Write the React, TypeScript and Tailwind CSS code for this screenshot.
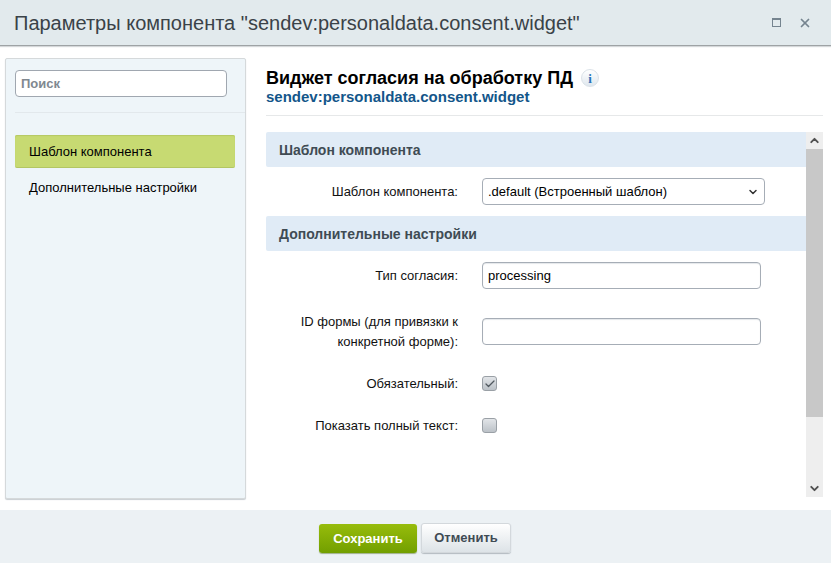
import { Check, ChevronDown, ChevronUp, X } from 'lucide-react';

function SectionHeader(props: { title: string }) {
  return (
    <div className="flex h-[35px] items-center rounded-l-[2px] bg-[#e0ebf6] pl-[13px] pt-[2px] text-[14px] font-bold text-[#3f4b54]">
      {props.title}
    </div>
  );
}

function Label(props: { children: React.ReactNode }) {
  return <div className="w-[192px] shrink-0 text-right text-[13px] leading-[20px] text-[#111]">{props.children}</div>;
}

function TextInput(props: { value?: string }) {
  return (
    <div className="flex h-[27px] w-[279px] items-center rounded-[4px] border border-[#a6adb6] bg-white pl-[5px] text-[13px] text-black shadow-[inset_0_1px_1px_#e4e7ea]">
      {props.value}
    </div>
  );
}

function Checkbox(props: { checked?: boolean }) {
  return (
    <div className="flex h-[15px] w-[15px] items-center justify-center rounded-[3px] border border-[#9aa0a6] bg-gradient-to-b from-[#e2e5e8] to-[#bcc2c8]">
      {props.checked && <Check size={12} strokeWidth={2.5} className="text-[#50585f]" />}
    </div>
  );
}

export default function App() {
  return (
    <div className="flex h-[563px] w-[831px] flex-col overflow-hidden bg-white font-['Liberation_Sans',sans-serif]">
      <header className="flex h-[46px] shrink-0 items-center justify-between border-b border-b-[#9ea3a5] bg-[#e2eaed] pl-[14px] pr-[19px] shadow-[0_1px_1px_#d5d8da]">
        <h1 className="text-[20px] leading-none text-[#3a4248]">Параметры компонента "sendev:personaldata.consent.widget"</h1>
        <div className="flex items-center gap-[17px] text-[#75848f]">
          <div className="h-[9px] w-[9px] border border-t-2 border-[#75848f]" />
          <X size={14} strokeWidth={3} />
        </div>
      </header>

      <div className="flex min-h-0 flex-1">
        <aside className="ml-[5px] mt-[12px] h-[441px] w-[241px] shrink-0 rounded-[2px] border border-[#d5d9db] bg-[#eef5f9] pl-[9px] pt-[11px] shadow-[0_1px_1px_#c8ced2]">
          <div className="flex h-[27px] w-[212px] items-center rounded-[4px] border border-[#a0a7b0] bg-white pl-[5px] text-[13px] font-bold text-[#808890]">
            Поиск
          </div>
          <div className="mt-[15px] h-px bg-[#e2e8ec]" />
          <div className="mt-[22px] flex h-[33px] w-[220px] items-center rounded-[2px] border-b border-b-[#b3c663] bg-[#c7da72] pl-[14px] pt-[2px] text-[13px] text-black shadow-[inset_0_1px_1px_#b5c864]">
            Шаблон компонента
          </div>
          <div className="mt-[11px] pl-[14px] text-[13px] leading-[18px] text-black">Дополнительные настройки</div>
        </aside>

        <main className="ml-[20px] flex min-w-0 flex-1 flex-col pr-[8px]">
          <div className="border-b border-b-[#e6e8e9] pb-[9px] pt-[22px]">
            <div className="flex h-[20px] items-center gap-[8px]">
              <span className="text-[18px] font-bold text-black">Виджет согласия на обработку ПД</span>
              <span className="flex h-[18px] w-[18px] items-center justify-center rounded-full border border-[#dbe2e8] bg-gradient-to-b from-white to-[#dfe7ee] font-['Liberation_Serif',serif] text-[13px] font-bold leading-none text-[#2a72b8]">
                i
              </span>
            </div>
            <div className="text-[15px] font-bold leading-[18px] text-[#13568a]">sendev:personaldata.consent.widget</div>
          </div>

          <div className="mt-[16px] flex h-[365px]">
            <div className="min-w-0 flex-1">
              <SectionHeader title="Шаблон компонента" />
              <div className="mt-[11px] flex h-[27px] items-center">
                <Label>Шаблон компонента:</Label>
                <div className="ml-[24px] flex h-[27px] w-[283px] items-center justify-between rounded-[4px] border border-[#a6adb6] bg-white pl-[5px] pr-[5px] text-[13px] text-black">
                  .default (Встроенный шаблон)
                  <ChevronDown size={12} strokeWidth={3} className="text-[#333]" />
                </div>
              </div>

              <div className="mt-[11px]">
                <SectionHeader title="Дополнительные настройки" />
              </div>

              <div className="mt-[11px] flex h-[27px] items-center">
                <Label>Тип согласия:</Label>
                <div className="ml-[24px]">
                  <TextInput value="processing" />
                </div>
              </div>

              <div className="mt-[23px] flex items-start">
                <Label>
                  ID формы (для привязки к<br />конкретной форме):
                </Label>
                <div className="ml-[24px] mt-[6px]">
                  <TextInput />
                </div>
              </div>

              <div className="mt-[20px] flex h-[23px] items-center">
                <Label>Обязательный:</Label>
                <div className="ml-[24px]">
                  <Checkbox checked />
                </div>
              </div>

              <div className="mt-[19px] flex h-[23px] items-center">
                <Label>Показать полный текст:</Label>
                <div className="ml-[24px]">
                  <Checkbox />
                </div>
              </div>
            </div>

            <div className="flex w-[17px] shrink-0 flex-col bg-[#eeeeee]">
              <div className="flex h-[17px] items-center justify-center">
                <ChevronUp size={13} strokeWidth={3.5} className="text-[#505050]" />
              </div>
              <div className="h-[268px] bg-[#c8c8c8]" />
              <div className="flex-1" />
              <div className="flex h-[17px] items-center justify-center">
                <ChevronDown size={13} strokeWidth={3.5} className="text-[#505050]" />
              </div>
            </div>
          </div>
        </main>
      </div>

      <footer className="flex h-[53px] shrink-0 items-start justify-center gap-[4px] bg-[#ecf1f4] pr-[1px] pt-[13px]">
        <button className="mt-[1px] h-[29px] w-[98px] rounded-[3px] bg-gradient-to-b from-[#97bc0c] to-[#729f00] text-[13px] font-bold text-white shadow-[0_1px_1px_#9fb08a]">
          Сохранить
        </button>
        <button className="h-[30px] w-[90px] rounded-[3px] border border-[#d3d8dc] bg-gradient-to-b from-white to-[#dde3e7] text-[13px] font-bold text-[#3f4b54] shadow-[0_1px_1px_#b3bac0]">
          Отменить
        </button>
      </footer>
    </div>
  );
}
